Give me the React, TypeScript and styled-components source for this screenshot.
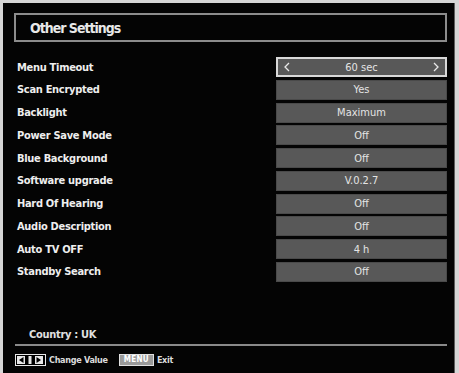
import React from 'react';
import styled, { createGlobalStyle } from 'styled-components';

const GlobalStyle = createGlobalStyle`
  body {
    margin: 0;
    background: #d6d6d6;
    font-family: "DejaVu Sans Condensed", "DejaVu Sans", sans-serif;
  }
`;

const Screen = styled('div')`
  margin: 3px 0 0 3px;
  width: 452px;
  height: 370px;
  background: #040404;
  border-right: 1px solid #5e5e5e;
  display: flex;
  flex-direction: column;
  box-sizing: border-box;
  color: #ececec;
`;

const TitleBar = styled('div')`
  margin: 10px 7px 0 11px;
  height: 29px;
  border: 2px solid #8c8c8c;
  box-sizing: border-box;
  display: flex;
  align-items: center;
  padding-left: 14px;
  font-size: 14px;
  font-weight: bold;
  letter-spacing: -1px;
  color: #e8e8e8;
`;

const List = styled('div')`
  margin: 15px 7px 0 14px;
  display: flex;
  flex-direction: column;
  gap: 2.75px;
`;

const Row = styled('div')`
  height: 20px;
  display: flex;
  align-items: center;
  justify-content: space-between;
`;

const Label = styled('span')`
  font-size: 11px;
  font-weight: bold;
  color: #eeeeee;
  letter-spacing: -0.3px;
`;

const Value = styled('div')<{ $active?: boolean }>`
  width: 171px;
  height: 20px;
  box-sizing: border-box;
  background: #585858;
  border: ${p => (p.$active ? '2px solid #d8d8d8' : '1px solid #4a4a4a')};
  display: flex;
  align-items: center;
  justify-content: space-between;
  padding: 0 6px;
  font-size: 11px;
  color: #e4e4e4;
`;

const ValueText = styled('span')`
  flex: 1;
  text-align: center;
`;

const Chevron = styled('svg')`
  width: 6px;
  height: 10px;
  flex: none;
`;

const Country = styled('div')`
  margin: auto 0 0 26px;
  font-size: 11px;
  font-weight: bold;
  color: #e0e0e0;
  letter-spacing: -0.3px;
`;

const Separator = styled('div')`
  margin: 3px 7px 0 12px;
  height: 2px;
  background: #8a8a8a;
`;

const Footer = styled('div')`
  height: 27px;
  display: flex;
  align-items: center;
  padding-left: 12px;
  gap: 3px;
  font-size: 9px;
  font-weight: bold;
  color: #dcdcdc;
  letter-spacing: -0.3px;
`;

const MenuKey = styled('span')`
  margin-left: 8px;
  border: 1px solid #e0e0e0;
  background: #9a9a9a;
  color: #ffffff;
  font-size: 8px;
  padding: 0 4px;
  line-height: 10px;
  letter-spacing: 0.3px;
`;

const items = [
  ['Menu Timeout', '60 sec'],
  ['Scan Encrypted', 'Yes'],
  ['Backlight', 'Maximum'],
  ['Power Save Mode', 'Off'],
  ['Blue Background', 'Off'],
  ['Software upgrade', 'V.0.2.7'],
  ['Hard Of Hearing', 'Off'],
  ['Audio Description', 'Off'],
  ['Auto TV OFF', '4 h'],
  ['Standby Search', 'Off'],
];

const App = () => {
  return (
    <>
      <GlobalStyle />
      <Screen>
        <TitleBar>Other Settings</TitleBar>
        <List>
          {items.map(([label, value], index) => (
            <Row key={label}>
              <Label>{label}</Label>
              <Value $active={index === 0}>
                {index === 0 && (
                  <Chevron viewBox="0 0 6 10">
                    <path d="M5 1 L1 5 L5 9" fill="none" stroke="#e8e8e8" strokeWidth="1.3" />
                  </Chevron>
                )}
                <ValueText>{value}</ValueText>
                {index === 0 && (
                  <Chevron viewBox="0 0 6 10">
                    <path d="M1 1 L5 5 L1 9" fill="none" stroke="#e8e8e8" strokeWidth="1.3" />
                  </Chevron>
                )}
              </Value>
            </Row>
          ))}
        </List>
        <Country>Country : UK</Country>
        <Separator />
        <Footer>
          <svg width="31" height="12" viewBox="0 0 31 12">
            <rect x="0.5" y="0.5" width="30" height="11" fill="#000" stroke="#e8e8e8" />
            <rect x="2" y="2" width="8" height="8" fill="#e8e8e8" />
            <path d="M8.5 3 L4 6 L8.5 9 Z" fill="#000" />
            <rect x="13.5" y="2" width="3" height="8" fill="#e8e8e8" />
            <rect x="20" y="2" width="8" height="8" fill="#e8e8e8" />
            <path d="M21.5 3 L26 6 L21.5 9 Z" fill="#000" />
          </svg>
          <span>Change Value</span>
          <MenuKey>MENU</MenuKey>
          <span>Exit</span>
        </Footer>
      </Screen>
    </>
  );
};

export default App;
